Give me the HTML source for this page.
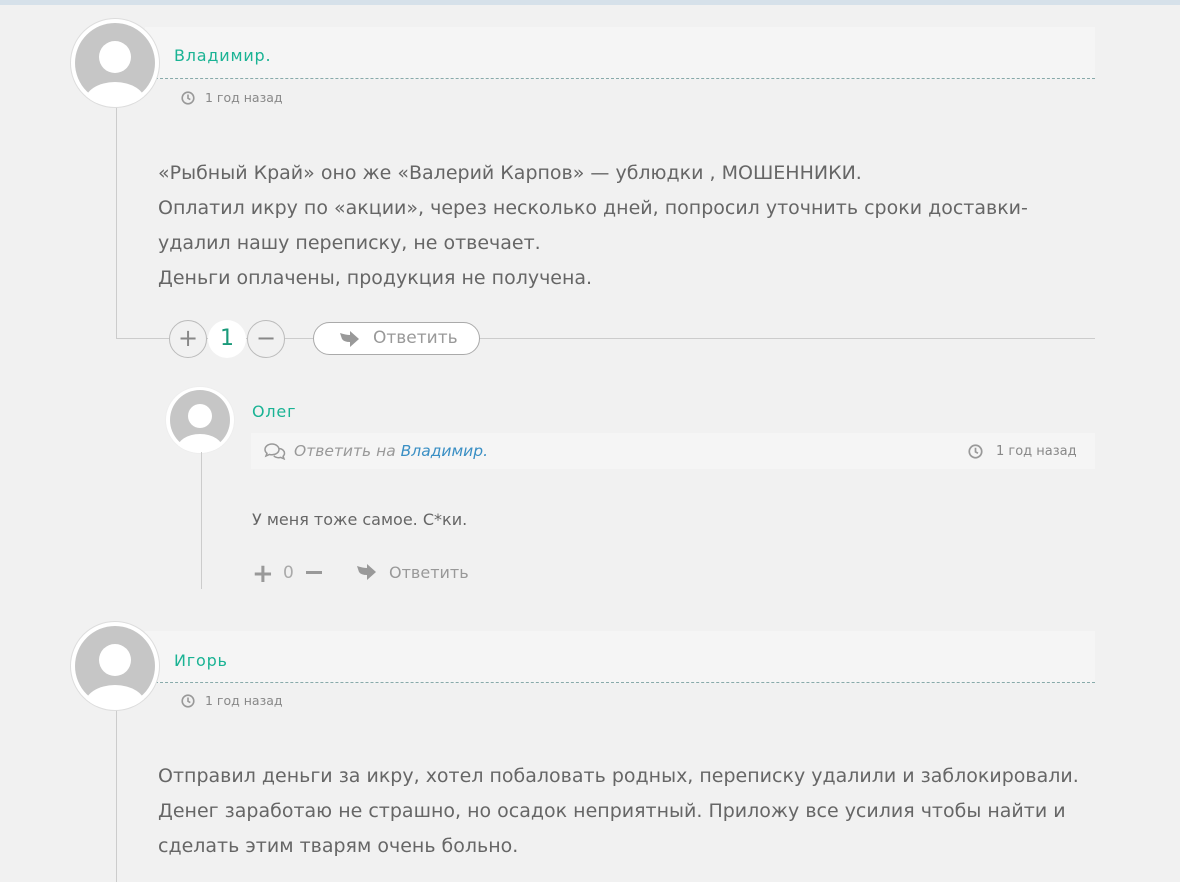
<!DOCTYPE html>
<html><head><meta charset="utf-8"><style>
*{margin:0;padding:0;box-sizing:border-box}
body{width:1180px;height:882px;background:#f1f1f1;position:relative;overflow:hidden;font-family:"DejaVu Sans","Liberation Sans",sans-serif;color:#666}
.a{position:absolute}
.av{position:absolute;border-radius:50%;background:#fff;border:1px solid #ddd;overflow:hidden}
.av svg{display:block;width:100%;height:100%}
.hd{position:absolute;background:#f5f5f5}
.name{position:absolute;color:#1ab394;font-size:16px;letter-spacing:.8px}
.time{position:absolute;font-size:12.5px;color:#888}
.txt{position:absolute;font-size:19px;line-height:35px;color:#666}
.vl{position:absolute;width:1px;background:#ccc}
.hl{position:absolute;height:1px;background:#ccc}
.cb{position:absolute;width:38px;height:38px;border-radius:50%;border:1px solid #bbb;background:#f1f1f1;color:#888;font-size:24px;text-align:center;line-height:35px}
</style></head><body>
<div class="a" style="left:0;top:0;width:1180px;height:5px;background:#d6e1ea"></div>

<div class="hd" style="left:145px;top:27px;width:950px;height:52px"></div>
<div class="a" style="left:145px;top:78px;width:950px;border-top:1px dashed #8aa"></div>
<div class="vl" style="left:116px;top:100px;height:238px"></div>
<div class="hl" style="left:116px;top:338px;width:979px"></div>
<div class="av" style="left:70px;top:18px;width:90px;height:90px;padding:4px"><svg viewBox="0 0 80 80"><circle cx="40" cy="40" r="40" fill="#c6c6c6"/><circle cx="40" cy="34" r="16" fill="#fff"/><ellipse cx="40" cy="78" rx="30" ry="19" fill="#fff"/></svg></div>
<div class="name" style="left:174px;top:46px">Владимир.</div>
<svg class="a" style="left:181px;top:91px" width="14" height="14" viewBox="0 0 14 14"><circle cx="7" cy="7" r="5.8" fill="none" stroke="#999" stroke-width="1.6"/><path d="M7 3.5V7.3L9.3 8.6" fill="none" stroke="#999" stroke-width="1.6"/></svg>
<div class="time" style="left:205px;top:90px">1 год назад</div>
<div class="txt" style="left:158px;top:156px">«Рыбный Край» оно же «Валерий Карпов» — ублюдки , МОШЕННИКИ.<br>Оплатил икру по «акции», через несколько дней, попросил уточнить сроки доставки-<br>удалил нашу переписку, не отвечает.<br>Деньги оплачены, продукция не получена.</div>
<div class="cb" style="left:169px;top:320px">+</div>
<div class="a" style="left:208px;top:320px;width:38px;height:38px;border-radius:50%;background:#fff;color:#1a9a7a;font-size:22px;text-align:center;line-height:38px">1</div>
<div class="cb" style="left:247px;top:320px">−</div>
<div class="a" style="left:313px;top:322px;width:167px;height:33px;border-radius:17px;border:1px solid #aaa;background:#fff;font-size:17px;color:#999;line-height:31px;padding-left:59px">Ответить</div>
<svg class="a" style="left:338px;top:330px" width="22" height="18" viewBox="0 0 22 18"><path d="M2 3Q8 5 12 5V1L21 9L12 17V12Q6 12 4 9Z" fill="#999"/></svg>

<div class="av" style="left:166px;top:387px;width:68px;height:66px;padding:3px;border:none;box-shadow:0 0 0 1px #eee"><svg viewBox="0 0 60 60"><circle cx="30" cy="30" r="30" fill="#c6c6c6"/><circle cx="30" cy="26" r="12" fill="#fff"/><ellipse cx="30" cy="59" rx="23" ry="15" fill="#fff"/></svg></div>
<div class="vl" style="left:201px;top:452px;height:137px"></div>
<div class="name" style="left:252px;top:402px;font-size:16px">Олег</div>
<div class="hd" style="left:251px;top:433px;width:844px;height:36px"></div>
<svg class="a" style="left:264px;top:443px" width="22" height="17" viewBox="0 0 22 17"><path d="M8 1C4 1 1 3.5 1 6.5c0 1.5.7 2.8 2 3.8L2 13l3.5-1.6c.8.3 1.6.4 2.5.4 4 0 7-2.5 7-5.3S12 1 8 1z" fill="none" stroke="#999" stroke-width="1.5"/><path d="M15.5 5.5c3 .5 5 2.5 5 4.8 0 1.2-.5 2.2-1.4 3l.9 2.5-3.3-1.4c-.7.2-1.4.3-2.1.3-2 0-3.7-.7-4.8-1.8" fill="none" stroke="#999" stroke-width="1.5"/></svg>
<div class="a" style="left:294px;top:442px;font-size:15.5px;font-style:italic;color:#999">Ответить на <span style="color:#3a8fc4">Владимир.</span></div>
<svg class="a" style="left:968px;top:444px" width="15" height="15" viewBox="0 0 14 14"><circle cx="7" cy="7" r="5.8" fill="none" stroke="#999" stroke-width="1.6"/><path d="M7 3.5V7.3L9.3 8.6" fill="none" stroke="#999" stroke-width="1.6"/></svg>
<div class="time" style="left:996px;top:444px;font-size:13px">1 год назад</div>
<div class="a" style="left:252px;top:510px;font-size:16px;color:#666">У меня тоже самое. С*ки.</div>
<div class="a" style="left:252px;top:559px;font-size:26px;font-weight:bold;color:#999">+</div>
<div class="a" style="left:283px;top:563px;font-size:17px;color:#aaa">0</div>
<div class="a" style="left:306px;top:571px;width:16px;height:3px;background:#999"></div>
<svg class="a" style="left:355px;top:563px" width="22" height="18" viewBox="0 0 22 18"><path d="M2 3Q8 5 12 5V1L21 9L12 17V12Q6 12 4 9Z" fill="#999"/></svg>
<div class="a" style="left:389px;top:563px;font-size:16px;color:#999">Ответить</div>

<div class="hd" style="left:145px;top:631px;width:950px;height:52px"></div>
<div class="a" style="left:145px;top:682px;width:950px;border-top:1px dashed #8aa"></div>
<div class="vl" style="left:116px;top:705px;height:177px"></div>
<div class="av" style="left:70px;top:621px;width:90px;height:90px;padding:4px"><svg viewBox="0 0 80 80"><circle cx="40" cy="40" r="40" fill="#c6c6c6"/><circle cx="40" cy="34" r="16" fill="#fff"/><ellipse cx="40" cy="78" rx="30" ry="19" fill="#fff"/></svg></div>
<div class="name" style="left:174px;top:651px">Игорь</div>
<svg class="a" style="left:181px;top:694px" width="14" height="14" viewBox="0 0 14 14"><circle cx="7" cy="7" r="5.8" fill="none" stroke="#999" stroke-width="1.6"/><path d="M7 3.5V7.3L9.3 8.6" fill="none" stroke="#999" stroke-width="1.6"/></svg>
<div class="time" style="left:205px;top:693px">1 год назад</div>
<div class="txt" style="left:158px;top:759px">Отправил деньги за икру, хотел побаловать родных, переписку удалили и заблокировали.<br>Денег заработаю не страшно, но осадок неприятный. Приложу все усилия чтобы найти и<br>сделать этим тварям очень больно.</div>
</body></html>
